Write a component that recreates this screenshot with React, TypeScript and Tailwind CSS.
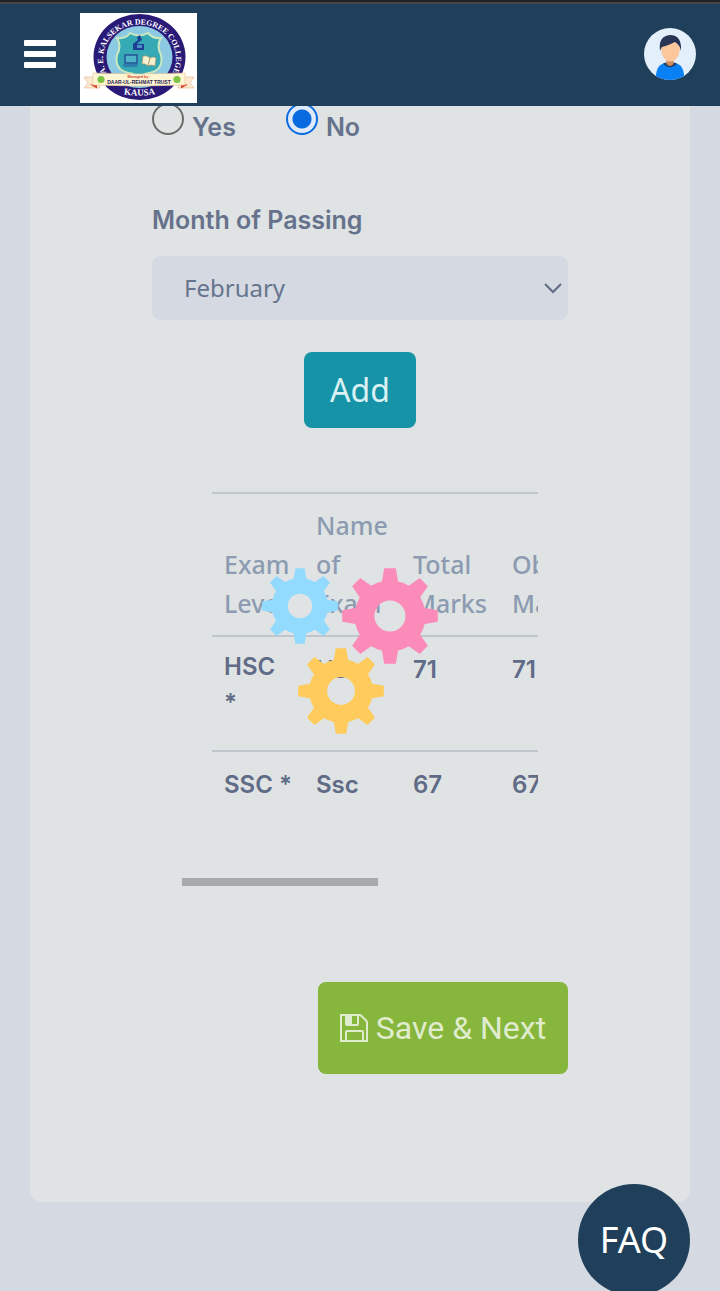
import { useState } from "react";

const months = [
  "January", "February", "March", "April", "May", "June",
  "July", "August", "September", "October", "November", "December",
];

const exams = [
  { level: "HSC *", name: "Hsc", total: 71, obtained: 71 },
  { level: "SSC *", name: "Ssc", total: 67, obtained: 67 },
];

function CollegeLogo() {
  return (
    <svg viewBox="0 0 117 90" className="h-[90px] w-[117px] bg-white" role="img" aria-label="College crest">
      <defs>
        <path id="crest-top" d="M26.500 60 A36.500 34 0 1 1 92.500 60" />
        <path id="crest-bottom" d="M38 80 Q59.500 85 81 80" />
      </defs>
      <ellipse cx="59.500" cy="44" rx="46" ry="43" fill="#2a1a78" />
      <ellipse cx="59.500" cy="44" rx="33" ry="31" fill="#8cc9e2" />
      <path
        d="M37 25 Q46 26 50 20 Q59 25 68 20 Q73 26 81 25 Q76 33 81 42 Q84 57 69 60 Q62 61 59 66 Q56 61 49 60 Q34 57 37 42 Q42 33 37 25Z"
        fill="#35a9b4" stroke="#cde8c0" strokeWidth="2"
      />
      <path d="M53 37 V31 L58 27 L57 24 L60 22 L62 27 L59 29 L57 31 H64 V37Z" fill="#1d3f94" />
      <path d="M57 32h5v3h-5z" fill="#4b8fc4" />
      <path d="M45 42h12v8H45z" fill="#4fb3c9" stroke="#245394" strokeWidth="1.500" />
      <path d="M43 51h15l-1 3H43z" fill="#2d7eae" />
      <path d="M63 43 Q67 42 70 45 Q73 43 76 45 L75 53 Q71 51 68 53 Q65 50 62 51Z" fill="#f7f0cf" stroke="#a98d5a" strokeWidth=".6" />
      <path d="M70 45 L68 53" stroke="#8f7443" strokeWidth=".7" />
      <text fill="#fff" fontSize="7.900" fontWeight="700" fontFamily="'Liberation Serif', serif">
        <textPath href="#crest-top" startOffset="50%" textAnchor="middle">A. E. KALSEKAR DEGREE COLLEGE</textPath>
      </text>
      <path d="M4 64 L20 64 L20 75 L4 75 L8 70Z M114 64 L98 64 L98 75 L114 75 L110 70Z" fill="#fbe8cf" stroke="#e6b58d" strokeWidth=".6" />
      <path d="M10 71.500h7v4z M108 71.500h-7v4z" fill="#d8402c" />
      <path d="M13 60 Q59 62 105 60 L105 72 Q59 74 13 72Z" fill="#fdf5d4" stroke="#e9c58d" strokeWidth=".6" />
      <circle cx="21" cy="66.500" r="3.600" fill="#7dc242" />
      <circle cx="97" cy="66.500" r="3.600" fill="#7dc242" />
      <text x="59" y="64.500" textAnchor="middle" fill="#d8402c" fontSize="3.600" fontWeight="700" fontFamily="'Liberation Sans', sans-serif">Managed by :</text>
      <text x="59" y="70.500" textAnchor="middle" fill="#2b2350" fontSize="5" fontWeight="700" fontFamily="'Liberation Sans', sans-serif">DAAR-UL-REHMAT TRUST</text>
      <text fill="#fff" fontSize="9" fontWeight="700" fontFamily="'Liberation Serif', serif">
        <textPath href="#crest-bottom" startOffset="50%" textAnchor="middle">KAUSA</textPath>
      </text>
    </svg>
  );
}

function Avatar() {
  return (
    <svg viewBox="0 0 52 52" className="size-[52px]" aria-hidden="true">
      <defs>
        <clipPath id="avatar-clip"><circle cx="26" cy="26" r="26" /></clipPath>
      </defs>
      <g clipPath="url(#avatar-clip)">
        <path d="M0 0h52v52H0z" fill="#e3effb" />
        <path d="M12 52 Q11 36 22 35 h8 Q41 36 40 52Z" fill="#0a80f5" />
        <path d="M19 35.500 Q26 43 33 35.500 L30 34.500 H22Z" fill="#213a66" />
        <path d="M22.500 29h7v7q-3.500 4-7 0z" fill="#d08e5b" />
        <path d="M17 17 Q17 33 26 33.500 Q36 33 36 17 L28 12Z" fill="#fdc79c" />
        <path d="M16 23 Q14 8 26 7 Q38 7 37 23 Q36 17 31 14 Q23 18 18 19 Q17 20 16 23Z" fill="#283556" />
      </g>
    </svg>
  );
}

function Gear({ x, y, size, color }: { x: number; y: number; size: number; color: string }) {
  return (
    <g transform={`translate(${x} ${y}) scale(${size / 48})`} fill={color}>
      <circle r="25.500" fill="none" stroke={color} strokeWidth="20" />
      {[0, 45, 90, 135, 180, 225, 270, 315].map((angle) => (
        <path key={angle} d="M-11 -31 Q-8.500 -34 -8 -35 L-5.800 -47.800 H5.800 L8 -35 Q8.500 -34 11 -31Z" transform={`rotate(${angle})`} />
      ))}
    </g>
  );
}

function Loader() {
  return (
    <div className="pointer-events-none fixed inset-0 z-20 flex items-center justify-center" role="status" aria-label="Loading">
      <svg viewBox="260 546 200 200" className="size-[200px]">
        <Gear x={300} y={606} size={38} color="#93dbfe" />
        <Gear x={390} y={616} size={48} color="#fb8bb9" />
        <Gear x={341} y={691} size={43} color="#fecb5c" />
      </svg>
    </div>
  );
}

function FloppyIcon() {
  return (
    <svg viewBox="0 0 28 28" className="size-7" fill="none" stroke="currentColor" strokeWidth="2" aria-hidden="true">
      <path d="M1 1h18.500q1 0 2 1l4.500 4.500q1 1 1 2V27H1z" />
      <path d="M6 1v9q0 1 1 1h10q1 0 1-1V1" />
      <path d="M6 27v-9q0-1 1-1h15q1 0 1 1v9" />
      <path d="M6 2h6v8H6z" fill="currentColor" stroke="none" />
    </svg>
  );
}

const radioClass =
  "size-8 shrink-0 appearance-none rounded-full border-2 border-[#6b6b6b] checked:border-[#0a6be0] checked:bg-[radial-gradient(circle,#0a6be0_9px,#dfeafa_10px)]";
const labelClass = "text-[25px] leading-8 font-semibold text-[#66728c]";
const headClass = "px-3 py-3 text-left align-bottom text-[25px] leading-[39px] font-medium";

export default function App() {
  const [repeater, setRepeater] = useState("no");
  const [month, setMonth] = useState("February");

  return (
    <div className="flex min-h-screen flex-col overflow-hidden bg-[#d5d9e1] font-['Noto_Sans','Open_Sans',sans-serif]">
      <header className="sticky top-0 z-10 border-t-2 border-[#222] bg-[#1f3f5a]">
        <div className="flex items-center gap-6 border-t-2 border-[#46494c] px-6 pt-[9px] pb-[3px]">
          <button type="button" aria-label="Menu" className="mb-2 flex w-8 flex-col gap-[5px]">
            <span className="h-[6px] rounded-[1px] bg-white" />
            <span className="h-[6px] rounded-[1px] bg-white" />
            <span className="h-[6px] rounded-[1px] bg-white" />
          </button>
          <a href="#home"><CollegeLogo /></a>
          <button type="button" aria-label="Profile" className="mb-2 ml-auto"><Avatar /></button>
        </div>
      </header>

      <main className="mx-[30px] -mt-1 mb-[89px] rounded-b-xl bg-[#dfe3e3] px-[122px] pt-px pb-32 font-['Inter','Noto_Sans',sans-serif]">
        <form onSubmit={(e) => e.preventDefault()}>
          <div className="flex gap-[50px]">
            <label className={`flex gap-2 ${labelClass}`}>
              <input type="radio" name="repeater" className={radioClass} checked={repeater === "yes"} onChange={() => setRepeater("yes")} />
              <span className="pt-2">Yes</span>
            </label>
            <label className={`flex gap-2 ${labelClass}`}>
              <input type="radio" name="repeater" className={radioClass} checked={repeater === "no"} onChange={() => setRepeater("no")} />
              <span className="pt-2">No</span>
            </label>
          </div>

          <label htmlFor="month" className={`mt-[61px] block ${labelClass}`}>Month of Passing</label>
          <div className="relative mt-5">
            <select
              id="month"
              value={month}
              onChange={(e) => setMonth(e.target.value)}
              className="h-16 w-full appearance-none rounded-lg bg-[#d5d9e1] px-8 font-['Noto_Sans',sans-serif] text-2xl text-[#66758e]"
            >
              {months.map((m) => <option key={m}>{m}</option>)}
            </select>
            <svg viewBox="0 0 20 12" className="pointer-events-none absolute top-[26px] right-[5px] h-3 w-5" fill="none" stroke="#5f6c82" strokeWidth="2" aria-hidden="true">
              <path d="M2 2l8 8 8-8" />
            </svg>
          </div>

          <div className="mt-8 flex justify-center">
            <button type="button" className="h-[76px] w-28 rounded-lg bg-[#1793a7] font-['Noto_Sans',sans-serif] text-[32px] text-[#d9f1f3]">Add</button>
          </div>

          <div className="mx-[30px] mt-16 overflow-hidden">
            <div className="pl-[30px]">
              <table className="w-[617px] table-fixed border-collapse text-[#5f6b87]">
                <colgroup>
                  <col className="w-[92px]" />
                  <col className="w-[97px]" />
                  <col className="w-[99px]" />
                  <col />
                </colgroup>
                <thead className="border-y-2 border-[#bfc6cc] font-['Noto_Sans',sans-serif] text-[#8c9bb1]">
                  <tr>
                    <th className={headClass}>Exam<br />Level</th>
                    <th className={headClass}>Name<br />of<br />Exam</th>
                    <th className={headClass}>Total<br />Marks</th>
                    <th className={headClass}>Obtained<br />Marks</th>
                  </tr>
                </thead>
                <tbody className="text-2xl font-semibold">
                  {exams.map((exam, i) => (
                    <tr key={exam.level} className="h-[115px] border-b-2 border-[#bfc6cc] last:border-0">
                      <td className={i === 0 ? "px-3 py-3 align-top leading-9" : "py-3 pl-3 align-top leading-[42px] whitespace-nowrap"}>
                        {exam.level}
                      </td>
                      <td className="px-3 py-3 align-top leading-[42px]">{exam.name}</td>
                      <td className="px-3 py-3 align-top leading-[42px]">{exam.total}</td>
                      <td className="px-3 py-3 align-top leading-[42px]">{exam.obtained}</td>
                    </tr>
                  ))}
                </tbody>
              </table>
            </div>
            <div className="mt-3 h-2 w-[55%] bg-[#a6aaaa]" />
          </div>

          <div className="mt-24 flex justify-end">
            <button type="submit" className="flex h-[92px] w-[250px] items-center justify-center gap-2 rounded-lg bg-[#87b63d] font-['Roboto',sans-serif] text-[32px] text-[#e0ecce]">
              <FloppyIcon />
              Save &amp; Next
            </button>
          </div>
        </form>
      </main>

      <Loader />

      <a href="#faq" className="fixed right-[30px] -bottom-[5px] z-30 flex size-28 items-center justify-center rounded-full bg-[#1f3f5a] text-4xl text-white">
        FAQ
      </a>
    </div>
  );
}
